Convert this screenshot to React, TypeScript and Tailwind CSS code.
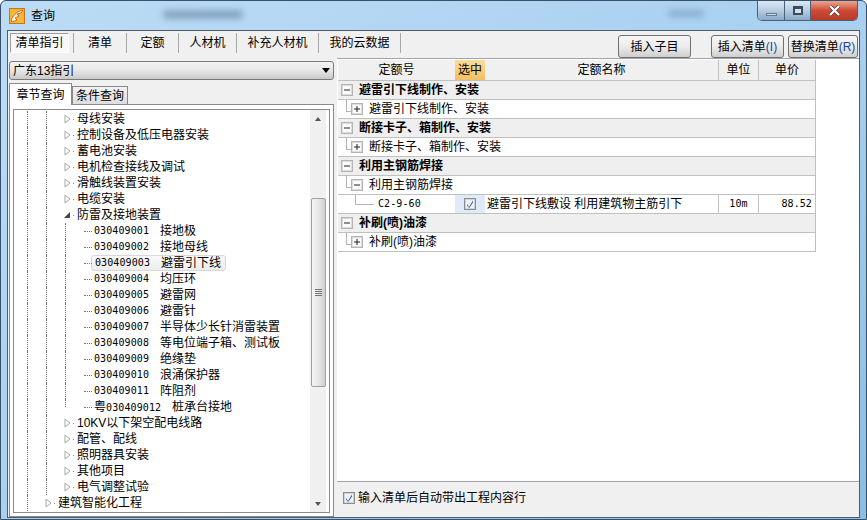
import React from 'react';

const FONT = "font-['Liberation_Sans','Noto_Sans_CJK_SC',sans-serif]";
const CODE = "font-['DejaVu_Sans_Mono','Noto_Sans_CJK_SC',monospace] text-[10px] tracking-[0.01em]";

function Check() {
  return (
    <svg width="12" height="12" viewBox="0 0 12 12" className="shrink-0">
      <rect x="0.5" y="0.5" width="11" height="11" fill="#d8dfe8" stroke="#8c8c8c" />
      <rect x="1.5" y="1.5" width="9" height="9" fill="#eef1f6" stroke="#d4d4d4" />
      <path d="M3 6 L5 9 L9 2.5 L9 4.5 L5.2 10 L3 7.5 Z" fill="#3a57b0" />
    </svg>
  );
}

function Box({ open }: { open?: boolean }) {
  return (
    <svg width="12" height="12" viewBox="0 0 12 12" className="shrink-0">
      <rect x="0.5" y="0.5" width="11" height="11" fill="#ececec" stroke="#b4b4b4" />
      <rect x="1.5" y="1.5" width="9" height="9" fill="#fbfbfb" stroke="#dcdcdc" />
      <path d={open ? 'M3 6 H9' : 'M3 6 H9 M6 3 V9'} stroke="#222" strokeWidth="1" />
    </svg>
  );
}

function Arrow({ open }: { open?: boolean }) {
  return (
    <svg width="7" height="10" viewBox="0 0 7 10" className="shrink-0">
      {open ? (
        <path d="M6 2 V8 H0 Z" fill="#444" />
      ) : (
        <path d="M1 1 L6 5 L1 9 Z" fill="#fff" stroke="#a6a6a6" />
      )}
    </svg>
  );
}

function Guide({ last }: { last?: boolean }) {
  return <div className={`w-[19px] shrink-0 border-l border-dotted border-[#777] ${last ? 'h-2 self-start' : 'h-4'}`} />;
}

function Branch({ label, level }: { label: string; level: number }) {
  return (
    <div className="flex h-4 items-center">
      <Guide />
      {level === 2 && <Guide />}
      <div className="-ml-px flex w-[13px] shrink-0 items-center">
        <Arrow />
        <span className="ml-[2px] h-px w-px bg-[#888]" />
      </div>
      <span className="whitespace-nowrap">{label}</span>
    </div>
  );
}

function Leaf({ code, name, selected, last }: { code: string; name: string; selected?: boolean; last?: boolean }) {
  const yue = code.startsWith('粤');
  return (
    <div className="flex h-4 items-center">
      <Guide />
      <Guide />
      <div className="relative h-4 w-[19px] shrink-0">
        <div className={`border-l border-dotted border-[#777] ${last ? 'h-2' : 'h-4'}`} />
        <div className="absolute left-[19px] top-2 w-[8px] border-t border-dotted border-[#777]" />
      </div>
      <div className={`ml-[7px] flex h-4 items-center rounded-[3px] pl-[3px] pr-1 ${selected ? 'border border-[#d9d9d9] bg-gradient-to-b from-[#fafafa] to-[#ececec] -ml-[-6px] pl-[2px]' : ''}`}>
        <span className={`${yue ? 'w-[78px]' : 'w-[66px]'} ${CODE} whitespace-nowrap`}>
          {yue ? <><span className="text-xs">粤</span>030409012</> : code}
        </span>
        <span className="whitespace-nowrap">{name}</span>
      </div>
    </div>
  );
}

function TreePanel() {
  const top = ['母线安装', '控制设备及低压电器安装', '蓄电池安装', '电机检查接线及调试', '滑触线装置安装', '电缆安装'];
  const leaves = [
    ['030409001', '接地极'],
    ['030409002', '接地母线'],
    ['030409003', '避雷引下线'],
    ['030409004', '均压环'],
    ['030409005', '避雷网'],
    ['030409006', '避雷针'],
    ['030409007', '半导体少长针消雷装置'],
    ['030409008', '等电位端子箱、测试板'],
    ['030409009', '绝缘垫'],
    ['030409010', '浪涌保护器'],
    ['030409011', '阵阻剂'],
    ['粤030409012', '桩承台接地'],
  ];
  const after = ['10KV以下架空配电线路', '配管、配线', '照明器具安装', '其他项目', '电气调整试验'];
  return (
    <div className="mx-[3px] mt-[4px] flex h-[404px] border border-[#8a8a8a] bg-white pl-[13px]">
      <div className="flex-1 overflow-hidden pt-[1px] text-xs leading-4 text-black">
        {top.map((t) => (
          <Branch key={t} label={t} level={2} />
        ))}
        <div className="flex h-4 items-center">
          <Guide />
          <Guide />
          <div className="-ml-px flex w-[13px] shrink-0 items-center">
            <Arrow open />
            <span className="ml-[2px] h-px w-px bg-[#888]" />
          </div>
          <span>防雷及接地装置</span>
        </div>
        {leaves.map((l, i) => (
          <Leaf key={l[0]} code={l[0]} name={l[1]} selected={i === 2} last={i === leaves.length - 1} />
        ))}
        {after.map((t) => (
          <Branch key={t} label={t} level={2} />
        ))}
        <Branch label="建筑智能化工程" level={1} />
      </div>
      <div className="mr-[3px] flex w-[16px] shrink-0 flex-col items-center bg-[#f0f0f0]">
        <div className="flex h-[17px] items-center justify-center">
          <div className="h-0 w-0 border-x-[3.5px] border-b-[4px] border-x-transparent border-b-[#555]" />
        </div>
        <div className="h-[71px]" />
        <div className="flex h-[189px] w-[15px] flex-col items-center justify-center gap-[1px] rounded-[2px] border border-[#a0a0a0] bg-gradient-to-r from-[#f4f4f4] via-[#e6e6e6] to-[#cfcfcf]">
          <span className="h-px w-[7px] bg-[#777]" />
          <span className="h-px w-[7px] bg-[#777]" />
          <span className="h-px w-[7px] bg-[#777]" />
          <span className="h-px w-[7px] bg-[#777]" />
        </div>
        <div className="flex-1" />
        <div className="flex h-[17px] items-center justify-center">
          <div className="h-0 w-0 border-x-[3.5px] border-t-[4px] border-x-transparent border-t-[#555]" />
        </div>
      </div>
    </div>
  );
}

function LeftColumn() {
  return (
    <div className="flex w-[329px] shrink-0 flex-col pl-[1px]">
      <div className="mt-[3px] flex h-[19px] w-[325px] items-center justify-between rounded-[3px] border border-[#7a7a7a] bg-gradient-to-b from-[#f4f4f4] via-[#e6e6e6] to-[#c9c9c9] pl-[3px] pr-[3px] text-xs text-black">
        <span>广东13指引</span>
        <div className="h-0 w-0 border-x-[4px] border-t-[5px] border-x-transparent border-t-black" />
      </div>
      <div className="mt-[2px] flex h-[22px] items-end">
        <div className="z-10 -mb-px flex h-[22px] w-[63px] items-center justify-center border border-b-0 border-[#8a8a8a] bg-white text-xs text-black">章节查询</div>
        <div className="flex h-[18px] w-[56px] items-center justify-center border border-b-0 border-[#8a8a8a] bg-gradient-to-b from-[#f2f2f2] to-[#dedede] text-xs text-black">条件查询</div>
      </div>
      <div className="h-[413px] w-[325px] border border-[#8a8a8a] bg-white">
        <TreePanel />
      </div>
    </div>
  );
}

function TabsRow() {
  const tabs: [string, string][] = [
    ['清单', 'w-[53px]'],
    ['定额', 'w-[52px]'],
    ['人材机', 'w-[58px]'],
    ['补充人材机', 'w-[82px]'],
    ['我的云数据', 'w-[83px]'],
  ];
  return (
    <div className="flex h-[27px] text-xs text-black">
      <div className="ml-[2px] mt-[2px] flex h-[20px] w-[59px] items-center justify-center border border-[#9c9c9c] border-b-white border-r-white bg-[#f8f8f8]">清单指引</div>
      <div className="ml-[4px] mt-[2px] flex h-[20px]">
        {tabs.map(([t, w]) => (
          <div key={t} className={`flex ${w} items-center justify-center border-l border-[#a8a8a8] last:border-r`}>
            {t}
          </div>
        ))}
      </div>
      <div className="flex-1" />
      <Btn className="ml-0 w-[73px]">插入子目</Btn>
      <Btn className="ml-[20px] w-[73px]">
        插入清单<span className="text-[#1c3fa8]">(I)</span>
      </Btn>
      <Btn className="ml-[4px] mr-[1px] w-[70px]">
        替换清单<span className="text-[#1c3fa8]">(R)</span>
      </Btn>
    </div>
  );
}

function Btn({ children, className }: { children: React.ReactNode; className: string }) {
  return (
    <div className={`mt-[4px] flex h-[23px] items-center justify-center whitespace-nowrap rounded-[3px] border border-[#707070] bg-gradient-to-b from-[#f6f6f6] via-[#ececec] to-[#cfcfcf] text-xs text-black ${className}`}>
      {children}
    </div>
  );
}

function Header() {
  const cell = 'flex h-full items-center justify-center';
  return (
    <div className="flex h-[21px] w-[478px] border-b border-[#c0c0c0] bg-[#f0f0f0] text-xs text-black">
      <div className={`${cell} w-[117px]`}>定额号</div>
      <div className={`${cell} w-[30px] bg-gradient-to-b from-[#fbdc9c] to-[#f2bf60]`}>选中</div>
      <div className={`${cell} w-[233px]`}>定额名称</div>
      <div className={`${cell} w-[40px] border-l border-[#c0c0c0]`}>单位</div>
      <div className={`${cell} w-[58px] border-x border-[#c0c0c0]`}>单价</div>
    </div>
  );
}

function Section({ label }: { label: string }) {
  return (
    <div className="relative flex h-[19px] w-[478px] items-center border-b border-r border-[#c0c0c0] bg-[#efefef] pl-[3px] text-xs font-bold text-black">
      <Box open />
      <span className="ml-[6px]">{label}</span>
    </div>
  );
}

function Child({ label, open }: { label: string; open?: boolean }) {
  return (
    <div className="flex h-[19px] w-[478px] items-center border-b border-r border-[#c0c0c0] bg-white text-xs text-black">
      <div className="mb-[6px] ml-[8px] h-[12px] w-[5px] shrink-0 border-b border-l border-[#b4b4b4]" />
      <Box open={open} />
      <span className="ml-[6px]">{label}</span>
    </div>
  );
}

function Grid() {
  return (
    <div className="flex h-[424px] flex-col border-y border-[#a0a4ac] bg-white pl-[1px] pt-[1px]">
      <Header />
      <Section label="避雷引下线制作、安装" />
      <Child label="避雷引下线制作、安装" />
      <Section label="断接卡子、箱制作、安装" />
      <Child label="断接卡子、箱制作、安装" />
      <Section label="利用主钢筋焊接" />
      <Child label="利用主钢筋焊接" open />
      <div className="flex h-[19px] w-[478px] items-center border-b border-r border-[#c0c0c0] bg-white text-xs text-black">
        <div className="flex h-full w-[117px] items-center">
          <div className="mb-[8px] ml-[17px] h-[10px] w-[19px] shrink-0 border-b border-l border-[#b4b4b4]" />
          <span className={`ml-[4px] ${CODE}`}>C2-9-60</span>
        </div>
        <div className="flex h-full w-[30px] items-center justify-center bg-[#dfebf8]">
          <Check />
        </div>
        <div className="flex h-full w-[233px] items-center whitespace-nowrap pl-[2px]">避雷引下线敷设 利用建筑物主筋引下</div>
        <div className={`flex h-full w-[40px] items-center justify-center border-l border-[#c0c0c0] ${CODE}`}>10m</div>
        <div className={`flex h-full flex-1 items-center justify-end border-l border-[#c0c0c0] pr-[3px] ${CODE}`}>88.52</div>
      </div>
      <Section label="补刷(喷)油漆" />
      <Child label="补刷(喷)油漆" />
    </div>
  );
}

function RightColumn() {
  return (
    <div className="flex min-w-0 flex-1 flex-col">
      <Grid />
      <div className="flex h-[31px] items-center gap-[3px] pl-[6px] pt-[1px] text-xs text-black">
        <Check />
        <span>输入清单后自动带出工程内容行</span>
      </div>
    </div>
  );
}

function TitleBar() {
  return (
    <div className="relative flex h-[29px] shrink-0 items-start">
      <svg width="16" height="16" viewBox="0 0 16 16" className="ml-[8px] mt-[7px]">
        <rect x="0.5" y="0.5" width="15" height="15" fill="#f4b73a" stroke="#c9741c" />
        <path d="M2 12 C5 6 9 3 14 2 L12 5 L8 6 L10 8 L6 10 L8 12 L3 14 Z" fill="#fff6dc" stroke="#c0501c" strokeWidth="0.8" />
      </svg>
      <span className="ml-[6px] mt-[6px] text-xs leading-[18px] text-black">查询</span>
      <div className="ml-[108px] mt-[9px] h-[9px] w-[80px] rounded bg-[#3d5a78]/40 blur-[3px]" />
      <div className="ml-[425px] mt-[9px] h-[7px] w-[36px] rounded bg-[#3d5a78]/30 blur-[3px]" />
      <div className="flex-1" />
      <div className="mr-[8px] flex h-[20px] overflow-hidden rounded-b-[5px] border border-t-0 border-[#4a5f78]">
        <div className="flex w-[27px] items-end justify-center border-r border-[#4a5f78] bg-gradient-to-b from-[#dbe8f4] via-[#b6cde2] to-[#8aa9c6] pb-[4px]">
          <span className="h-[3px] w-[11px] border border-[#64788c] bg-[#d4dfe9]" />
        </div>
        <div className="flex w-[26px] items-center justify-center border-r border-[#4a5f78] bg-gradient-to-b from-[#dbe8f4] via-[#b6cde2] to-[#8aa9c6]">
          <span className="h-[9px] w-[10px] border-2 border-t-[3px] border-[#3c4c5c] bg-[#d4dfe9]" />
        </div>
        <div className="flex w-[46px] items-center justify-center bg-gradient-to-b from-[#e8a590] via-[#cf4a34] to-[#b8392a]">
          <svg width="13" height="11" viewBox="0 0 13 11">
            <path d="M2 1 L11 10 M11 1 L2 10" stroke="#3a2a2a" strokeWidth="3.4" />
            <path d="M2 1 L11 10 M11 1 L2 10" stroke="#fff" strokeWidth="2.4" />
          </svg>
        </div>
      </div>
    </div>
  );
}

export default function App() {
  return (
    <div className={`h-[520px] w-[867px] overflow-hidden bg-white ${FONT}`}>
      <div className="flex h-full flex-col rounded-t-[6px] border border-[#39506a] bg-gradient-to-br from-[#bcdcf6] via-[#a9d0f0] to-[#8dbde4]">
        <TitleBar />
        <div className="mx-[6px] mb-[6px] flex-1 border border-[#4e5c6c] bg-[#f0f0f0]">
          <TabsRow />
          <div className="flex">
            <LeftColumn />
            <RightColumn />
          </div>
        </div>
      </div>
    </div>
  );
}
